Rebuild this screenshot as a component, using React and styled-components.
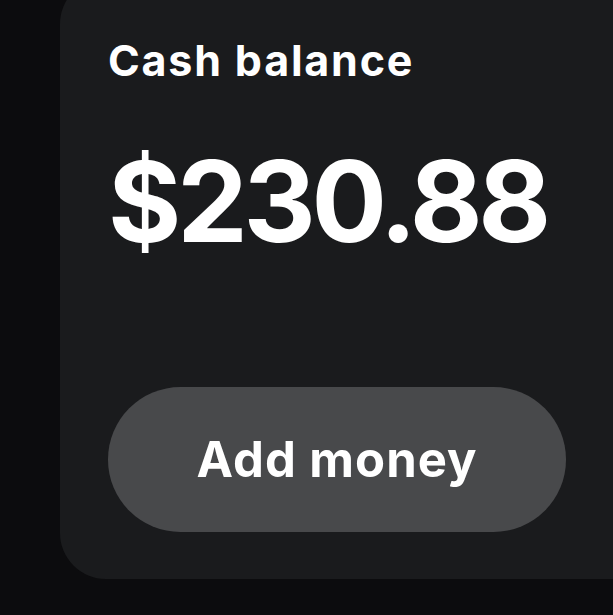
import React from "react";
import styled, { createGlobalStyle } from "styled-components";

const Global = createGlobalStyle`
  html, body { margin: 0; padding: 0; background: #0c0c0e; }
  body { font-family: Inter, "Open Sans", sans-serif; -webkit-font-smoothing: antialiased; }
  #root { height: 615px; overflow: hidden; }
`;

const Page = styled.div`
  height: 615px;
  display: flex;
  padding-left: 60px;
  box-sizing: border-box;
  background: #0c0c0e;
`;

const Card = styled.section`
  margin-top: -22px;
  height: 601px;
  flex: 1;
  margin-right: -60px;
  box-sizing: border-box;
  background: #1a1b1d;
  border-radius: 46px;
  padding: 61px 0 0 48px;
  display: flex;
  flex-direction: column;
  color: #fff;
`;

const Label = styled.div`
  font-size: 43px;
  font-weight: 700;
  line-height: 43px;
  letter-spacing: 1.8px;
`;

const Amount = styled.div`
  margin-top: 63px;
  font-size: 112px;
  font-weight: 700;
  line-height: 112px;
  letter-spacing: -4.2px;
`;

const Button = styled.button`
  margin-top: 130px;
  width: 458px;
  height: 145px;
  border: none;
  border-radius: 73px;
  background: #48494b;
  color: #fff;
  font-family: Inter, "Open Sans", sans-serif;
  font-size: 49px;
  line-height: 49px;
  font-weight: 700;
  letter-spacing: 1px;
  display: flex;
  align-items: center;
  justify-content: center;
  padding: 0;
`;

export default function App() {
  return (
    <>
      <Global />
      <Page>
        <Card>
          <Label>Cash balance</Label>
          <Amount>$230.88</Amount>
          <Button>Add money</Button>
        </Card>
      </Page>
    </>
  );
}
